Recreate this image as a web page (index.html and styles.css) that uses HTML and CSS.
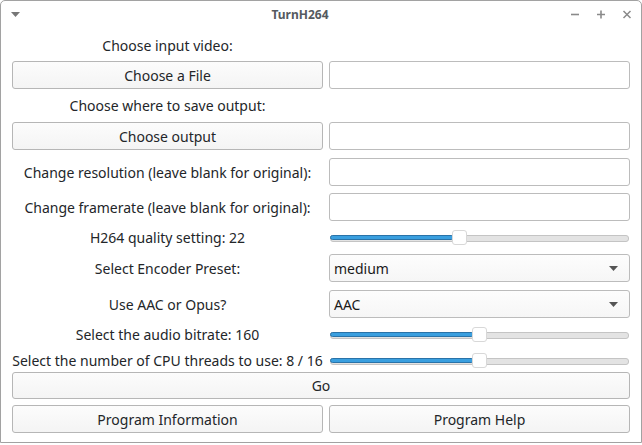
FILE: index.html
```html
<!DOCTYPE html>
<html>
<head>
<meta charset="utf-8">
<link rel="stylesheet" href="styles.css">
</head>
<body>
<div class="window">
  <div class="titlebar">
    <svg class="menu-ico" width="10" height="6" viewBox="0 0 10 6"><path d="M0 0H9L4.5 5Z" fill="#777"/></svg>
    <div class="title">TurnH264</div>
    <div class="controls">
      <svg width="10" height="10" viewBox="0 0 10 10"><path d="M1 5.5H9" stroke="#8a8a8a" stroke-width="1.6"/></svg>
      <svg width="10" height="10" viewBox="0 0 10 10"><path d="M1 5.5H9M5 1.5V9.5" stroke="#8a8a8a" stroke-width="1.6"/></svg>
      <svg width="10" height="10" viewBox="0 0 10 10"><path d="M1.5 2L8.5 9M8.5 2L1.5 9" stroke="#8a8a8a" stroke-width="1.5"/></svg>
    </div>
  </div>
  <div class="content">
    <div class="row r-label first"><div class="lbl">Choose input video:</div></div>
    <div class="row r-w"><button class="btn">Choose a File</button><div class="input"></div></div>
    <div class="row r-label"><div class="lbl">Choose where to save output:</div></div>
    <div class="row r-w"><button class="btn">Choose output</button><div class="input"></div></div>
    <div class="row r-w plus1"><div class="lbl">Change resolution (leave blank for original):</div><div class="input"></div></div>
    <div class="row r-w"><div class="lbl">Change framerate (leave blank for original):</div><div class="input"></div></div>
    <div class="row r-label"><div class="lbl">H264 quality setting: 22</div>
      <div class="slider"><div class="fill" style="width:calc((100% - 15px) * 0.43 + 2px)"></div><div class="handle" style="left:calc((100% - 15px) * 0.43)"></div></div></div>
    <div class="row r-w"><div class="lbl">Select Encoder Preset:</div><div class="combo"><span>medium</span><svg width="9" height="5" viewBox="0 0 9 5"><path d="M0 0H9L4.5 5Z" fill="#555"/></svg></div></div>
    <div class="row r-w plus1"><div class="lbl">Use AAC or Opus?</div><div class="combo"><span>AAC</span><svg width="9" height="5" viewBox="0 0 9 5"><path d="M0 0H9L4.5 5Z" fill="#555"/></svg></div></div>
    <div class="row r-label"><div class="lbl">Select the audio bitrate: 160</div>
      <div class="slider"><div class="fill" style="width:calc((100% - 15px) * 0.5 + 2px)"></div><div class="handle" style="left:calc((100% - 15px) * 0.5)"></div></div></div>
    <div class="row r-label"><div class="lbl">Select the number of CPU threads to use: 8 / 16</div>
      <div class="slider"><div class="fill" style="width:calc((100% - 15px) * 0.5 + 2px)"></div><div class="handle" style="left:calc((100% - 15px) * 0.5)"></div></div></div>
    <div class="row r-go"><button class="btn">Go</button></div>
    <div class="row r-w"><button class="btn">Program Information</button><button class="btn">Program Help</button></div>
  </div>
</div>
</body>
</html>
```
FILE: styles.css
```css
* { box-sizing: border-box; }
html, body { margin: 0; padding: 0; background: #fff; }
body {
  font-family: "Noto Sans", "Open Sans", sans-serif;
  font-size: 14px;
  color: #232629;
}
.window {
  width: 642px;
  height: 443px;
  border: 1px solid #a2a2a2;
  border-radius: 5px 5px 0 0;
  background: #fff;
  position: relative;
}
.titlebar {
  height: 28px;
  position: relative;
}
.menu-ico { position: absolute; left: 10px; top: 11px; }
.title {
  position: absolute;
  left: 0; right: 42px; top: 0;
  height: 28px;
  line-height: 27px;
  text-align: center;
  font-weight: bold;
  font-size: 12px;
  color: #555a60;
}
.controls {
  position: absolute;
  right: 9px;
  top: 8px;
  display: flex;
  gap: 16px;
}
.content {
  display: flex;
  flex-direction: column;
  gap: 7px;
  padding: 7px 11px 0 11px;
}
.row {
  display: grid;
  grid-template-columns: 311px 301px;
  column-gap: 6px;
  align-items: center;
}
.r-label { height: 19px; }
.r-label.first { height: 18px; }
.r-w { height: 28px; }
.plus1 { margin-top: 1px; }
.r-go { height: 27px; margin-top: -5px; grid-template-columns: 618px; }
.r-go + .r-w { margin-top: -1px; }
.lbl { text-align: center; white-space: nowrap; line-height: 19px; }
.btn {
  font: inherit;
  color: #232629;
  height: 28px;
  border: 1px solid #b6b6b6;
  border-radius: 3px;
  background: linear-gradient(#fcfcfc, #f4f4f4);
  padding: 0;
}
.r-go .btn { height: 27px; }
.input {
  height: 28px;
  border: 1px solid #bcbcbc;
  border-radius: 3px;
  background: #fff;
}
.combo {
  height: 28px;
  border: 1px solid #bcbcbc;
  border-radius: 3px;
  background: linear-gradient(#fdfdfd, #f6f6f6);
  display: flex;
  align-items: center;
  justify-content: space-between;
  padding: 0 11px 0 4px;
  font-size: 14px;
  color: #1a1a1a;
}
.slider {
  position: relative;
  height: 15px;
  margin: 0 1px 0 1px;
}
.slider::before {
  content: "";
  position: absolute;
  left: 0; right: 0; top: 5px;
  height: 5px;
  border: 1px solid #c4c4c4;
  border-radius: 3px;
  background: #e3e3e3;
}
.fill {
  position: absolute;
  left: 0; top: 5px;
  height: 5px;
  border: 1px solid #2a73a8;
  border-radius: 3px;
  background: #3a9fdf;
  z-index: 1;
}
.handle {
  position: absolute;
  top: 0;
  width: 15px;
  height: 15px;
  border: 1px solid #d8d8d8;
  border-radius: 3px;
  background: #fff;
  z-index: 2;
}
```
